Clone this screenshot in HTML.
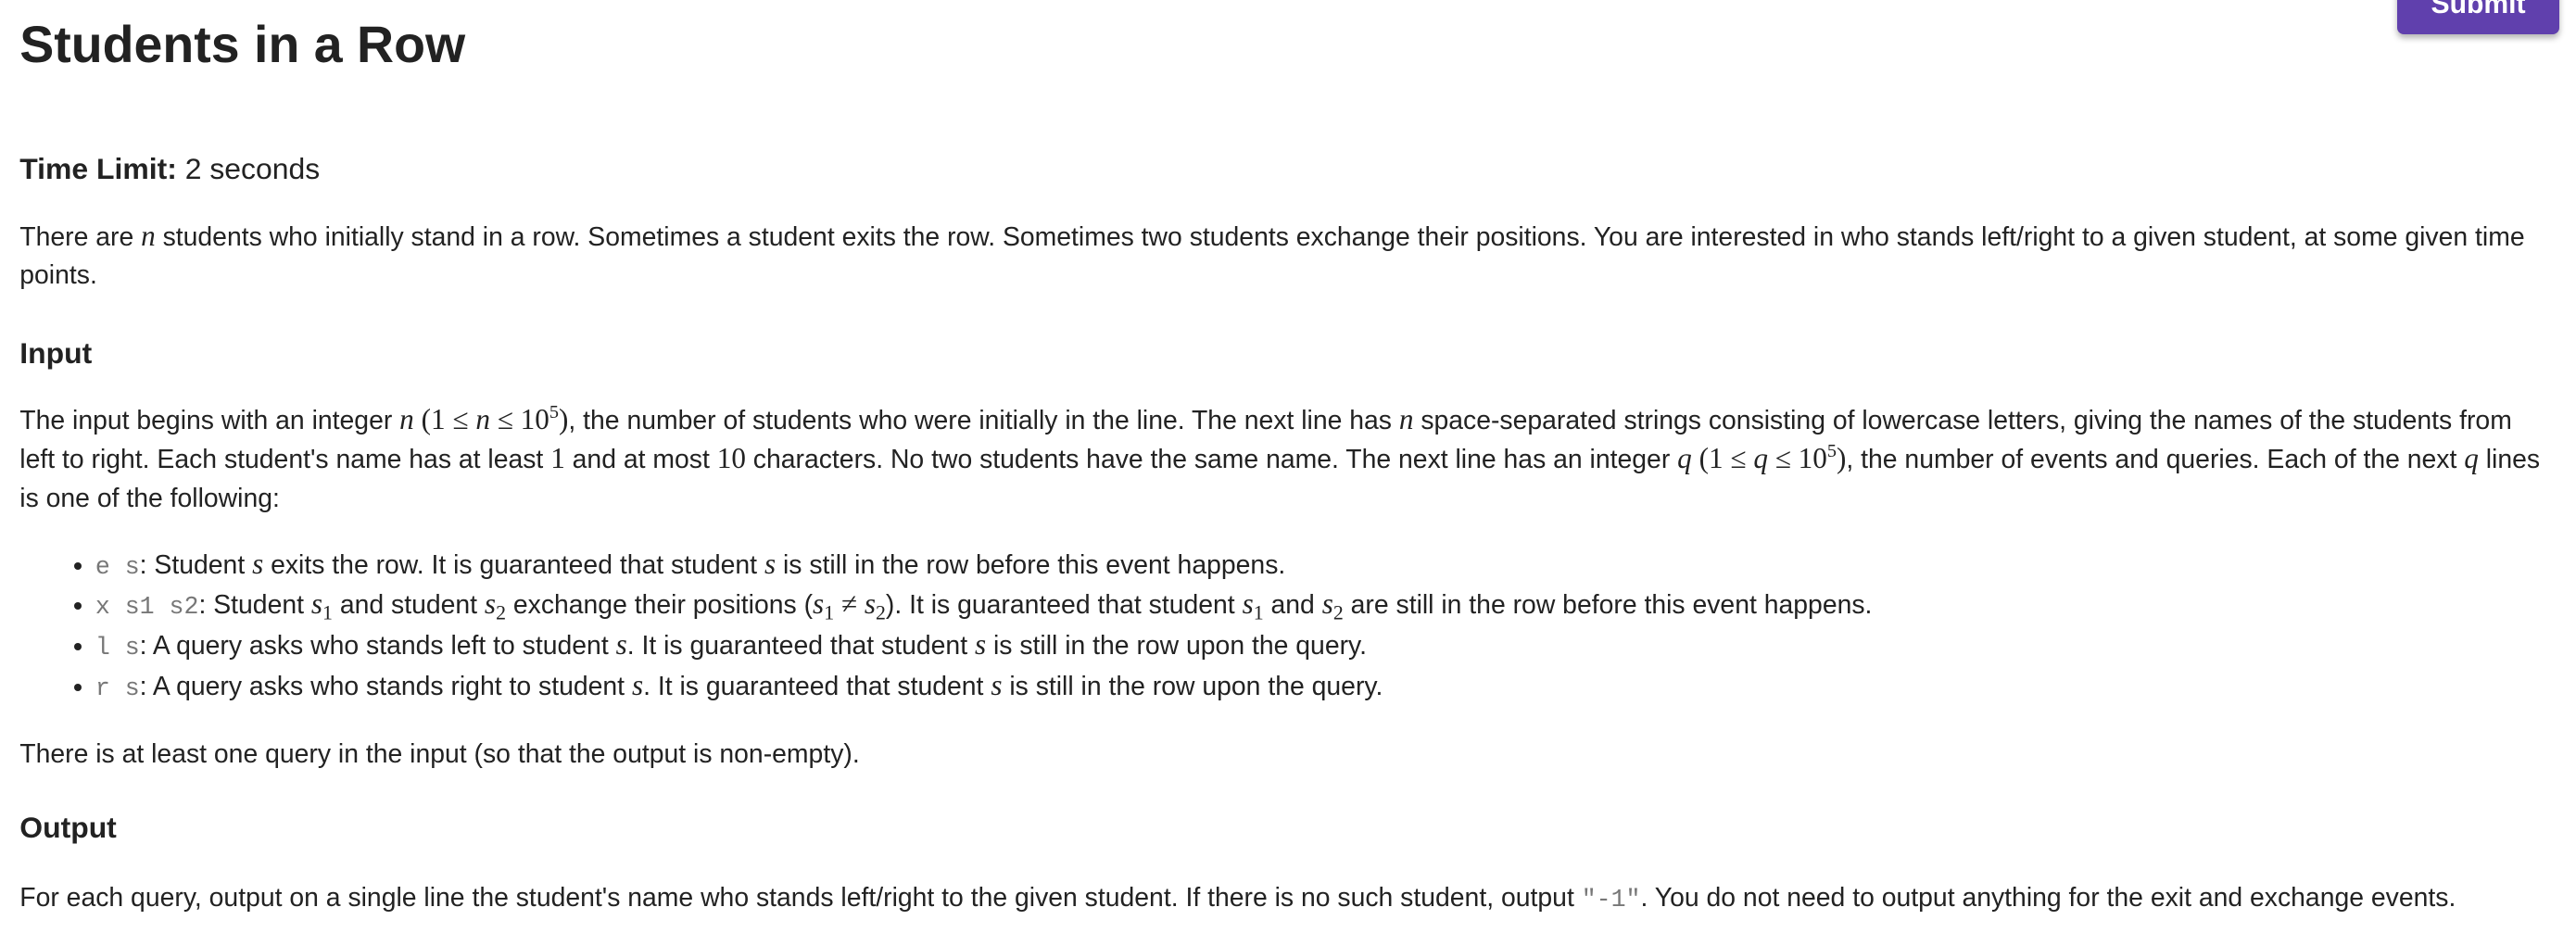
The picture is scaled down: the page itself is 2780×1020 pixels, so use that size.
<!DOCTYPE html>
<html><head><meta charset="utf-8">
<style>
html,body{margin:0;padding:0;background:#fff;}
body{width:2780px;height:1020px;overflow:hidden;}
#w{zoom:1.773;position:relative;width:1568px;height:575px;font-family:"Liberation Sans",Arial,sans-serif;color:#222;font-size:16px;}
.b{position:absolute;left:12px;right:18px;}
h1{position:absolute;left:12px;top:11px;margin:0;font-size:31.3px;line-height:32px;font-weight:bold;}
.h{font-size:18px;font-weight:bold;line-height:24px;}
p{margin:0;line-height:23.5px;}
.m{font-family:"Liberation Serif","DejaVu Serif",serif;font-style:italic;font-size:1.1em;line-height:1;}
.mr{font-family:"Liberation Serif","DejaVu Serif",serif;font-size:1.1em;line-height:1;}
sup{font-size:0.65em;vertical-align:0.6em;line-height:0}
sub{font-size:0.7em;vertical-align:-0.3em;line-height:0;font-style:normal}
code{font-family:"Liberation Mono",monospace;color:#777;font-size:15px;line-height:1;}
ul{margin:0;padding-left:46px;}
li{height:24.7px;line-height:24.7px;}
.btn{position:absolute;left:1459px;top:-15px;width:99px;height:36px;background:#6040ad;border-radius:4px;box-shadow:0 2px 4px rgba(0,0,0,.3);color:#fff;font-weight:bold;font-size:17px;text-align:center;line-height:13px;}
.btn span{position:relative;top:11px}
</style></head><body><div id="w">
<div class="btn"><span>Submit</span></div>
<h1>Students in a Row</h1>
<div class="b" style="top:91px"><div class="h"><b>Time Limit:</b> <span style="font-weight:normal">2 seconds</span></div></div>
<div class="b" style="top:133px"><p>There are <span class="m">n</span> students who initially stand in a row. Sometimes a student exits the row. Sometimes two students exchange their positions. You are interested in who stands left/right to a given student, at some given time points.</p></div>
<div class="b" style="top:203px"><div class="h">Input</div></div>
<div class="b" style="top:245px"><p>The input begins with an integer <span class="m">n</span> <span class="mr">(1 ≤ <i>n</i> ≤ 10<sup>5</sup>)</span>, the number of students who were initially in the line. The next line has <span class="m">n</span> space-separated strings consisting of lowercase letters, giving the names of the students from left to right. Each student's name has at least <span class="mr">1</span> and at most <span class="mr">10</span> characters. No two students have the same name. The next line has an integer <span class="m">q</span> <span class="mr">(1 ≤ <i>q</i> ≤ 10<sup>5</sup>)</span>, the number of events and queries. Each of the next <span class="m">q</span> lines is one of the following:</p></div>
<div class="b" style="top:332px"><ul>
<li><code>e s</code>: Student <span class="m">s</span> exits the row. It is guaranteed that student <span class="m">s</span> is still in the row before this event happens.</li>
<li><code>x s1 s2</code>: Student <span class="m">s<sub>1</sub></span> and student <span class="m">s<sub>2</sub></span> exchange their positions (<span class="m">s<sub>1</sub> <span style="font-style:normal">≠</span> s<sub>2</sub></span>). It is guaranteed that student <span class="m">s<sub>1</sub></span> and <span class="m">s<sub>2</sub></span> are still in the row before this event happens.</li>
<li><code>l s</code>: A query asks who stands left to student <span class="m">s</span>. It is guaranteed that student <span class="m">s</span> is still in the row upon the query.</li>
<li><code>r s</code>: A query asks who stands right to student <span class="m">s</span>. It is guaranteed that student <span class="m">s</span> is still in the row upon the query.</li>
</ul></div>
<div class="b" style="top:448px"><p>There is at least one query in the input (so that the output is non-empty).</p></div>
<div class="b" style="top:492px"><div class="h">Output</div></div>
<div class="b" style="top:535px"><p>For each query, output on a single line the student's name who stands left/right to the given student. If there is no such student, output <code>"-1"</code>. You do not need to output anything for the exit and exchange events.</p></div>
</div></body></html>
